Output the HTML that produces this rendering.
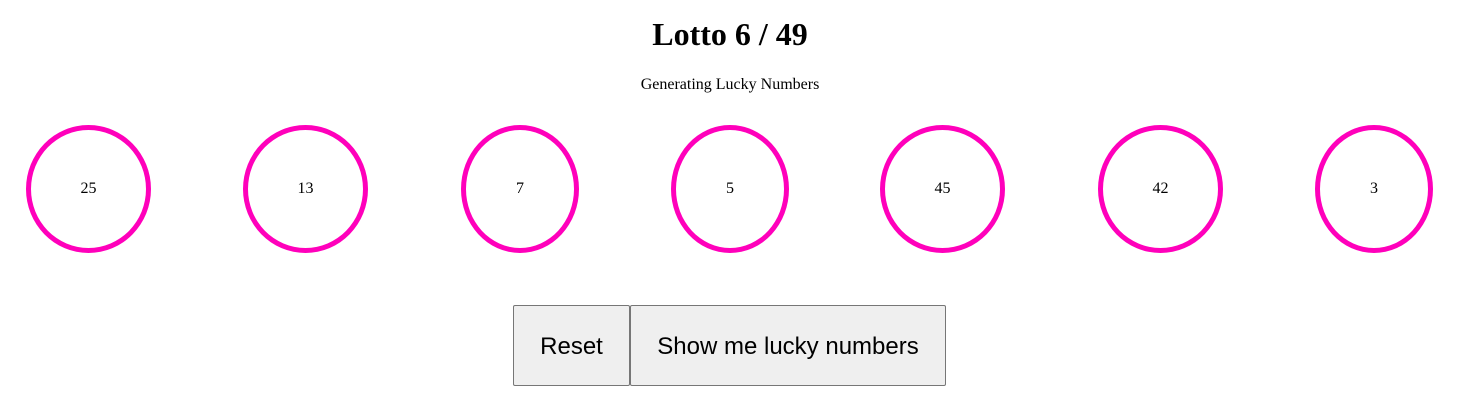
<!DOCTYPE html>
<html><head><style>
body{margin:0;width:1479px;height:420px;background:#fff;font-family:"Liberation Serif",serif;position:relative;overflow:hidden}
h1{position:absolute;top:14px;left:0;width:1460px;text-align:center;margin:0;font-size:32px;line-height:40px}
.sub{position:absolute;top:75px;left:0;width:1460px;text-align:center;font-size:16px;line-height:20px}
.c{position:absolute;top:125px;height:118px;border:5px solid #f0b;border-radius:50%;display:flex;align-items:center;justify-content:center;font-size:16px;box-sizing:content-box}
button{position:absolute;top:305px;height:81px;background:#efefef;border:1px solid #767676;border-radius:2px;font-family:"Liberation Sans",sans-serif;font-size:24px;color:#000;box-sizing:border-box;padding:2px 0 0 0}
</style></head><body>
<h1>Lotto 6 / 49</h1>
<div class="sub">Generating Lucky Numbers</div>
<div class="c" style="left:26px;width:115px">25</div>
<div class="c" style="left:243px;width:115px">13</div>
<div class="c" style="left:461px;width:108px">7</div>
<div class="c" style="left:671px;width:108px">5</div>
<div class="c" style="left:880px;width:115px">45</div>
<div class="c" style="left:1098px;width:115px">42</div>
<div class="c" style="left:1315px;width:108px">3</div>
<button style="left:513px;width:117px">Reset</button>
<button style="left:630px;width:316px">Show me lucky numbers</button>
</body></html>
